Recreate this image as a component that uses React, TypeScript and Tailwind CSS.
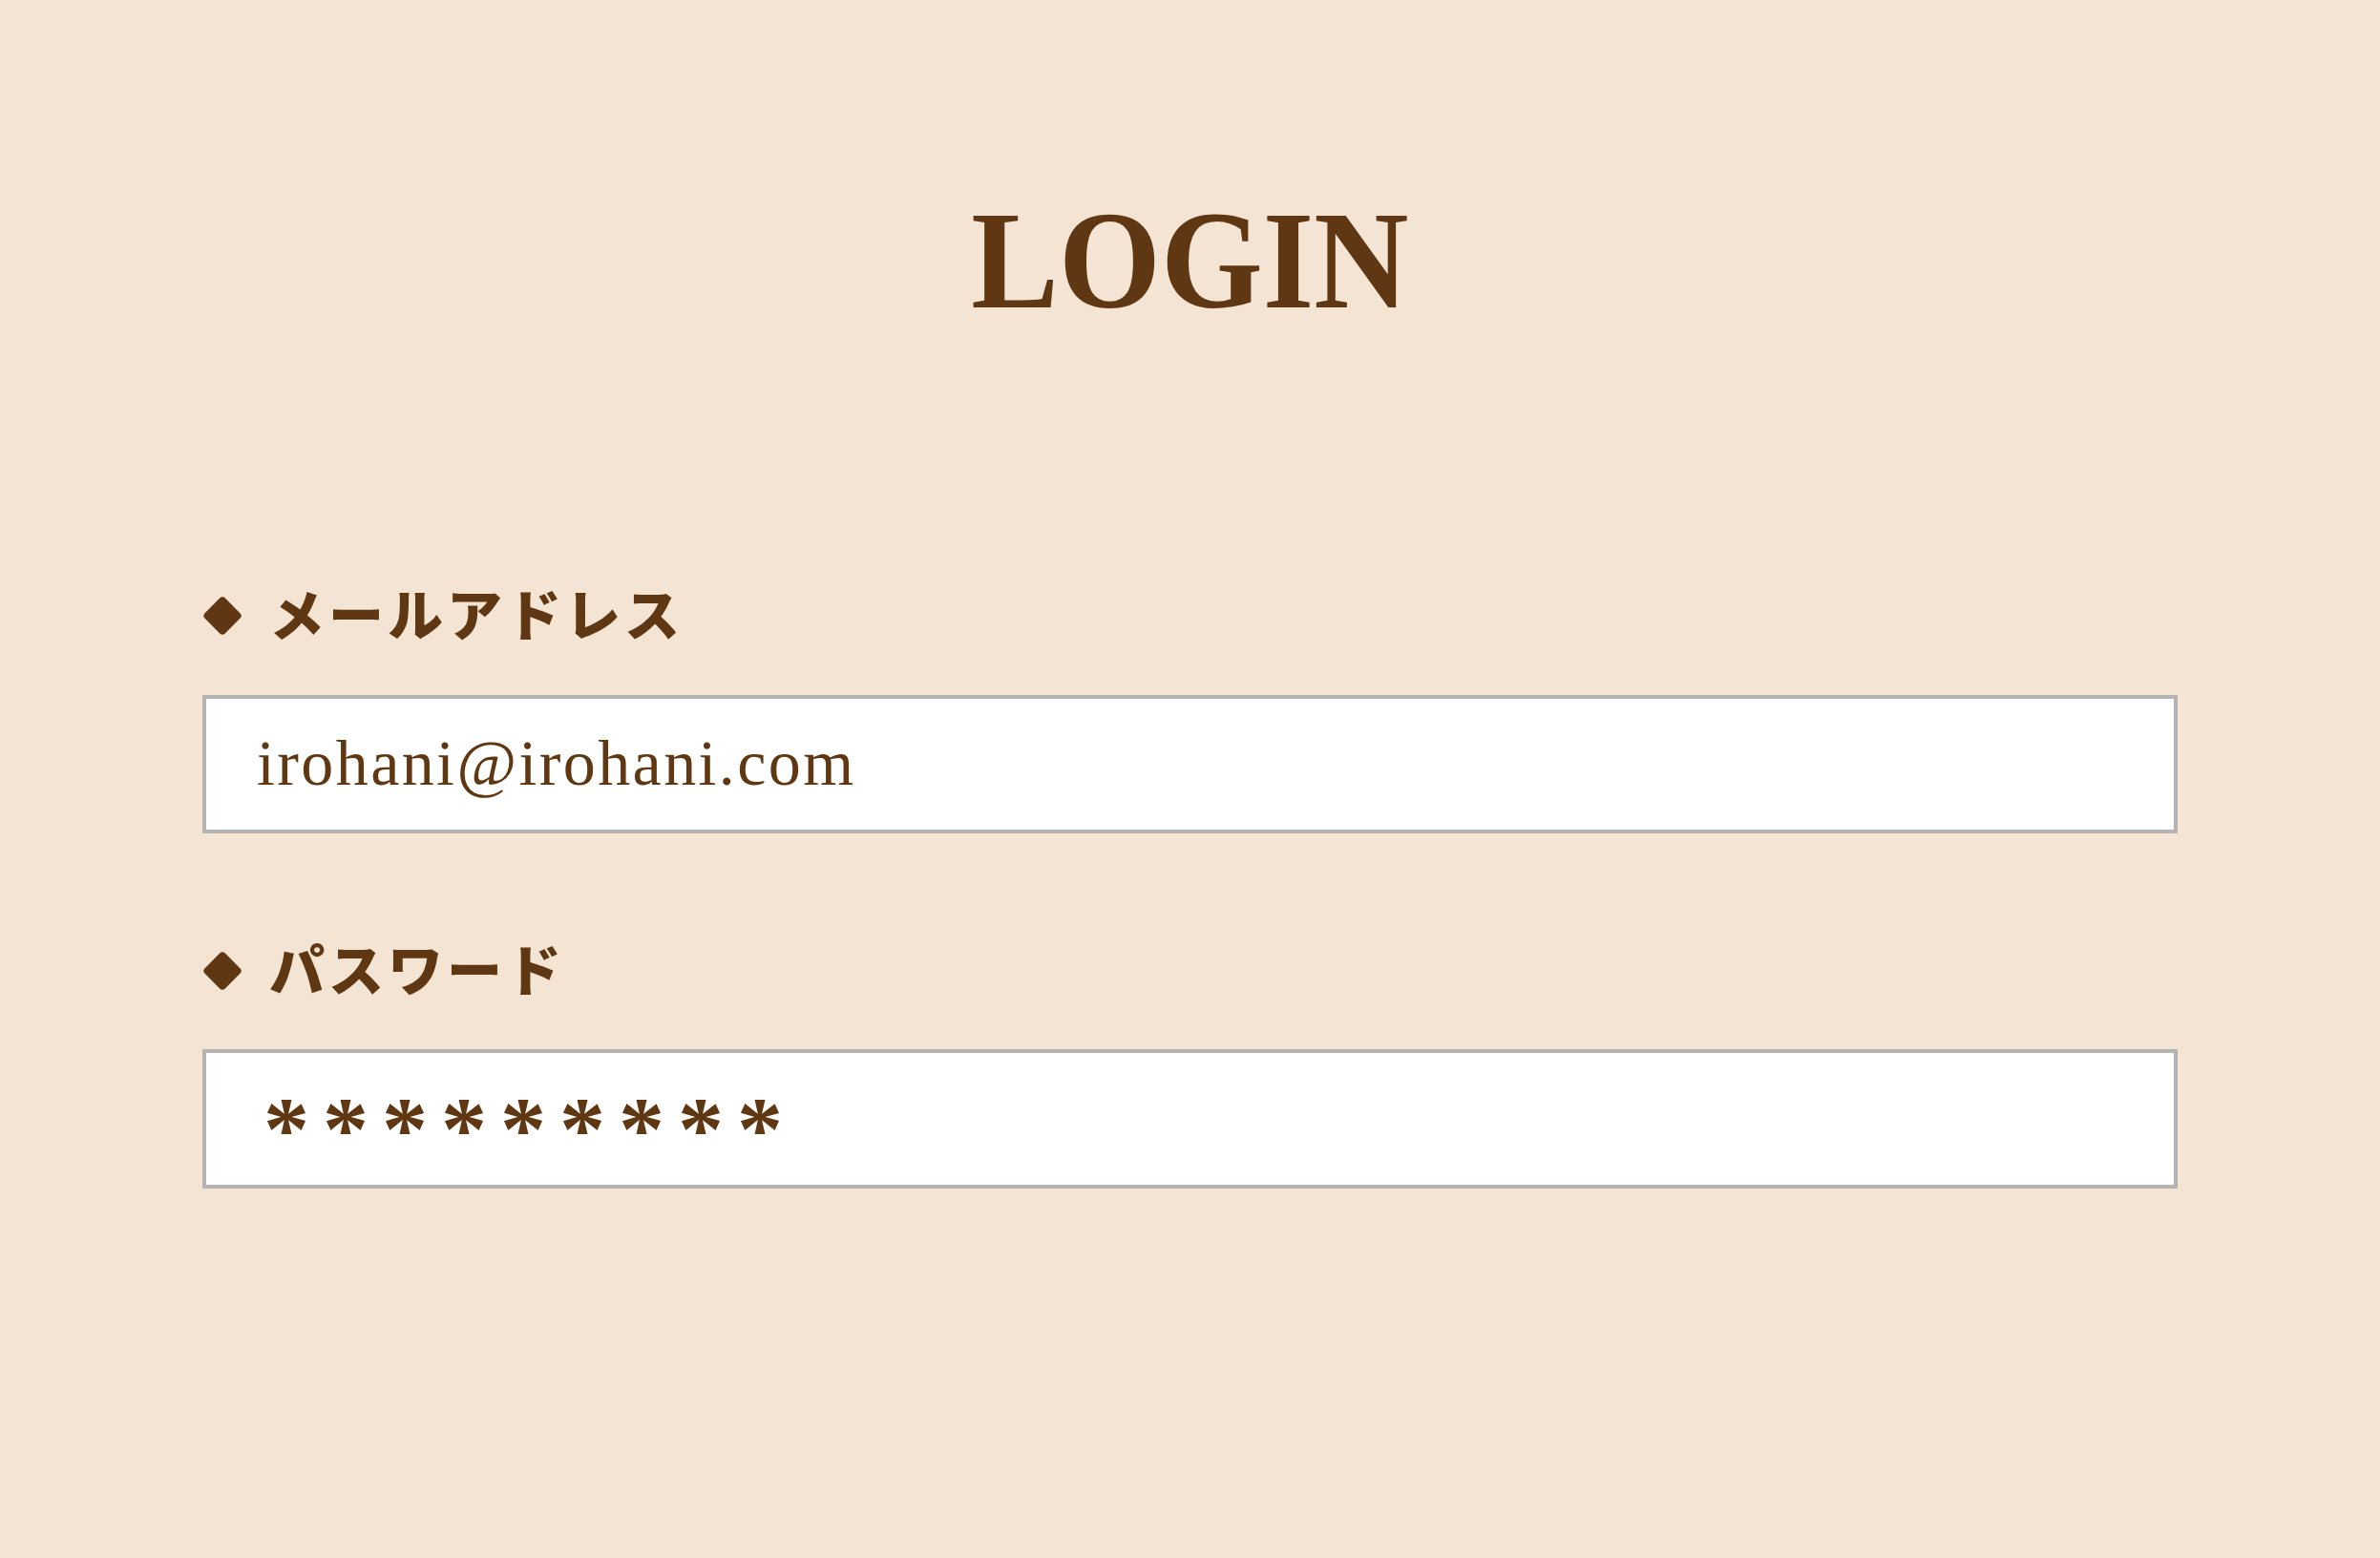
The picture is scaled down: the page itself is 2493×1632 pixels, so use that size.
import React from "react";

const brown = "text-[#5f3813]";

function Label({ children }: { children: React.ReactNode }) {
  return (
    <div className="flex h-[60px] items-center">
      <div className="ml-[6px] mr-[34px] h-[30px] w-[30px] rotate-45 rounded-[4px] bg-[#5f3813]" />
      <span
        className={`${brown} -translate-y-[4px] text-[58px] font-black leading-none tracking-[4px]`}
        style={{ fontFamily: '"Noto Sans CJK JP", sans-serif' }}
      >
        {children}
      </span>
    </div>
  );
}

export default function App() {
  return (
    <div className="h-[1632px] w-full bg-[#f4e4d3] px-[212px] pt-[199px]">
      <h1
        className={`${brown} scale-x-[0.935] text-center text-[147px] font-bold leading-none`}
        style={{ fontFamily: '"Liberation Serif", serif' }}
      >
        LOGIN
      </h1>

      <div className="mt-[269px]">
        <Label>メールアドレス</Label>
        <div className="mt-[53px] flex h-[145px] items-center border-4 border-[#b4b4b4] bg-white pl-[53px]">
          <span
            className={`${brown} -translate-y-[2px] text-[68px] font-medium leading-none tracking-[2.4px]`}
            style={{ fontFamily: '"Liberation Serif", serif' }}
          >
            irohani@irohani.com
          </span>
        </div>
      </div>

      <div className="mt-[114px]">
        <Label>パスワード</Label>
        <div className="mt-[52px] flex h-[146px] items-center border-4 border-[#b4b4b4] bg-white pl-[60px]">
          <span
            className={`${brown} translate-y-[11px] text-[96px] font-bold leading-none tracking-[14px]`}
            style={{ fontFamily: '"Liberation Serif", serif' }}
          >
            *********
          </span>
        </div>
      </div>
    </div>
  );
}
